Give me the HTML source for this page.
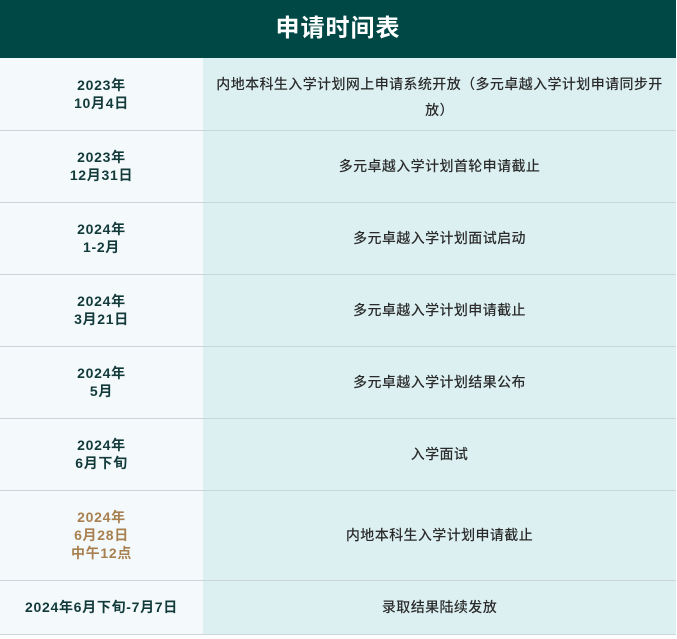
<!DOCTYPE html>
<html><head><meta charset="utf-8"><style>
body{margin:0;width:677px;height:639px;background:#fff;font-family:"Liberation Sans","Noto Sans CJK SC",sans-serif;overflow:hidden}
.h{height:58px;background:#004845;color:#fff;font-size:24px;font-weight:bold;text-align:center;line-height:58px;width:676px;letter-spacing:1px}
table{border-collapse:collapse;width:676px;table-layout:fixed}
td{border-bottom:1.5px solid #ccd6da;text-align:center;font-size:14px;line-height:18px;padding:0;letter-spacing:0.4px}
td.l{width:203px;background:#f4fafc;font-weight:bold;color:#133a3a;letter-spacing:0.7px}
td.r{background:#dcf0f2;color:#2b2b2b;font-weight:500}
.o{color:#a8804f!important}
</style></head><body>
<div class="h">申请时间表</div>
<table>
<tr style="height:72px"><td class="l">2023年<br>10月4日</td><td class="r" style="padding:6px 8px 0;line-height:26px">内地本科生入学计划网上申请系统开放（多元卓越入学计划申请同步开放）</td></tr>
<tr style="height:72px"><td class="l">2023年<br>12月31日</td><td class="r">多元卓越入学计划首轮申请截止</td></tr>
<tr style="height:72px"><td class="l">2024年<br>1-2月</td><td class="r">多元卓越入学计划面试启动</td></tr>
<tr style="height:72px"><td class="l">2024年<br>3月21日</td><td class="r">多元卓越入学计划申请截止</td></tr>
<tr style="height:72px"><td class="l">2024年<br>5月</td><td class="r">多元卓越入学计划结果公布</td></tr>
<tr style="height:72px"><td class="l">2024年<br>6月下旬</td><td class="r">入学面试</td></tr>
<tr style="height:90px"><td class="l o">2024年<br>6月28日<br>中午12点</td><td class="r">内地本科生入学计划申请截止</td></tr>
<tr style="height:54px"><td class="l">2024年6月下旬-7月7日</td><td class="r">录取结果陆续发放</td></tr>
</table>
</body></html>
